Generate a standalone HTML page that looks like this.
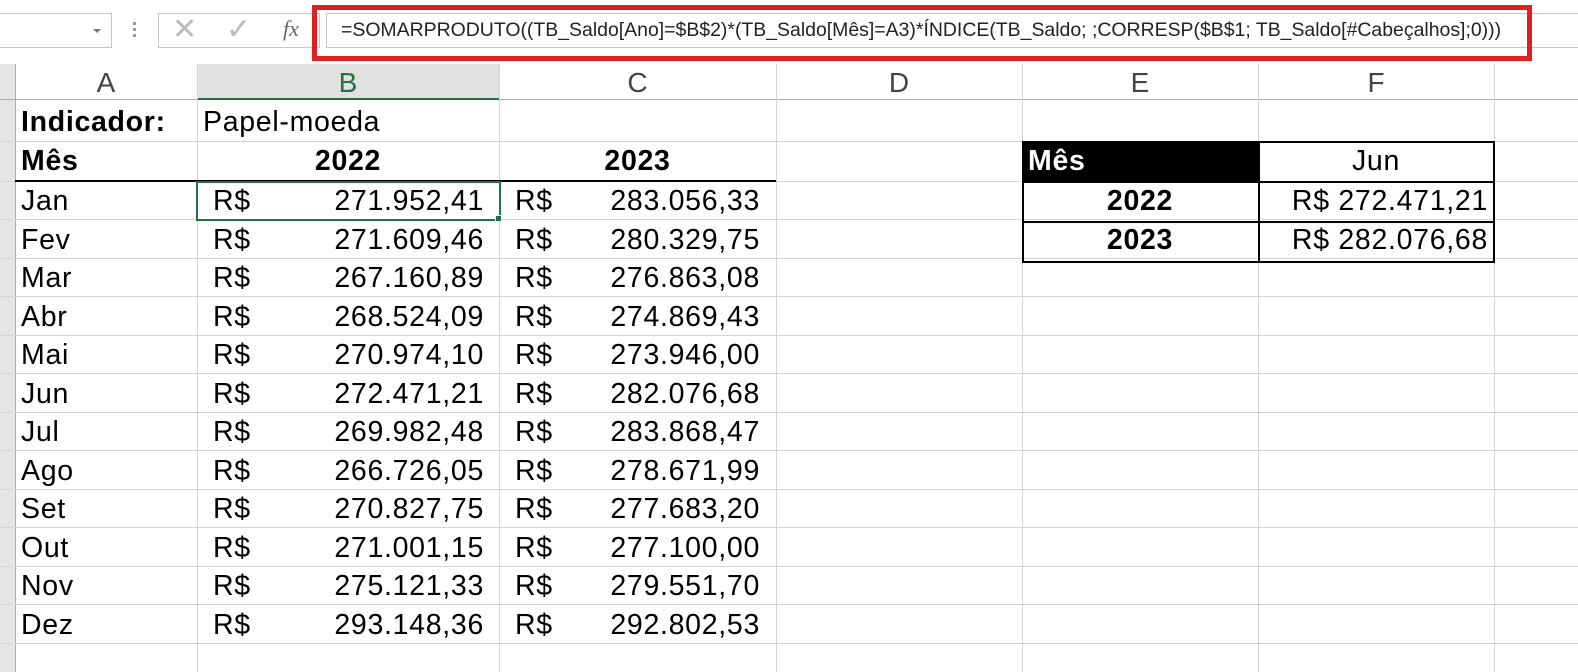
<!DOCTYPE html>
<html><head><meta charset="utf-8"><style>
*{margin:0;padding:0;box-sizing:border-box}
body{width:1578px;height:672px;overflow:hidden;background:#fff;font-family:"Liberation Sans",Arial,sans-serif;position:relative}
.a{position:absolute}
.hl{position:absolute;left:0;width:1578px;height:1px;background:#d4d4d4}
.vl{position:absolute;top:64px;height:608px;width:1px;background:#d4d4d4}
.ch{position:absolute;top:64px;height:36px;font-size:28px;color:#444;text-align:center;line-height:38px}
.t{position:absolute;font-size:28.5px;letter-spacing:0.7px;color:#000;white-space:nowrap;line-height:38px}
.b{font-weight:bold}
</style></head><body>
<!-- toolbar -->
<div class="a" style="left:0;top:13px;width:112px;height:35px;border:1px solid #c6c6c6;border-left:none"></div>
<div class="a" style="left:93px;top:29px;width:0;height:0;border-left:4px solid transparent;border-right:4px solid transparent;border-top:4px solid #777"></div>
<div class="a" style="left:133px;top:22px;width:3px;height:3px;background:#999;box-shadow:0 6px 0 #999,0 12px 0 #999"></div>
<div class="a" style="left:158px;top:13px;width:162px;height:35px;border:1px solid #c6c6c6"></div>
<div class="a" style="left:172px;top:12px;font-size:30px;color:#bbb">✕</div>
<div class="a" style="left:226px;top:12px;font-size:30px;color:#bbb">✓</div>
<div class="a" style="left:283px;top:16px;font-size:22px;color:#666;font-family:'Liberation Serif',serif;font-style:italic">fx</div>
<div class="a" style="left:326px;top:13px;width:1252px;height:35px;border-top:1px solid #c6c6c6;border-bottom:1px solid #c6c6c6;border-left:1px solid #c6c6c6"></div>
<div class="a" style="left:341px;top:19px;font-size:19.45px;color:#222;white-space:nowrap">=SOMARPRODUTO((TB_Saldo[Ano]=$B$2)*(TB_Saldo[Mês]=A3)*ÍNDICE(TB_Saldo; ;CORRESP($B$1; TB_Saldo[#Cabeçalhos];0)))</div>
<div class="a" style="left:312px;top:5px;width:1220px;height:56px;border:5px solid #e02020"></div>
<!-- column headers -->
<div class="a" style="left:0;top:64px;width:15px;height:608px;background:#e6e6e6"></div>
<div class="a" style="left:197px;top:64px;width:302px;height:36px;background:#e1e1e1"></div>
<div class="hl" style="top:99px;background:#ababab"></div>
<div class="a" style="left:197px;top:98px;width:302px;height:2px;background:#217346"></div>
<div class="vl" style="left:15px;background:#ababab"></div>
<div class="vl" style="left:197px"></div>
<div class="vl" style="left:499px"></div>
<div class="vl" style="left:776px"></div>
<div class="vl" style="left:1022px"></div>
<div class="vl" style="left:1258px"></div>
<div class="vl" style="left:1494px"></div>
<div class="ch" style="left:15px;width:182px">A</div>
<div class="ch" style="left:197px;width:302px;color:#217346">B</div>
<div class="ch" style="left:499px;width:277px">C</div>
<div class="ch" style="left:776px;width:246px">D</div>
<div class="ch" style="left:1022px;width:236px">E</div>
<div class="ch" style="left:1258px;width:236px">F</div>
<!-- row lines -->
<div class="hl" style="top:141px"></div>
<div class="hl" style="top:181px"></div>
<div class="hl" style="top:219px"></div>
<div class="hl" style="top:258px"></div>
<div class="hl" style="top:296px"></div>
<div class="hl" style="top:335px"></div>
<div class="hl" style="top:373px"></div>
<div class="hl" style="top:412px"></div>
<div class="hl" style="top:450px"></div>
<div class="hl" style="top:489px"></div>
<div class="hl" style="top:527px"></div>
<div class="hl" style="top:566px"></div>
<div class="hl" style="top:604px"></div>
<div class="hl" style="top:643px"></div>
<div class="a" style="left:15px;top:180px;width:761px;height:2px;background:#000"></div>
<!-- row 1,2 -->
<div class="t b" style="left:21px;top:103px">Indicador:</div>
<div class="t" style="left:203px;top:103px">Papel-moeda</div>
<div class="t b" style="left:21px;top:142px">Mês</div>
<div class="t b" style="left:197px;top:142px;width:302px;text-align:center">2022</div>
<div class="t b" style="left:499px;top:142px;width:277px;text-align:center">2023</div>
<!-- data -->
<div class="a" style="left:0;top:181px">
<div style="position:relative">
<div class="t" style="left:21px;top:1px">Jan</div><div class="t" style="left:213px;top:1px">R$</div><div class="t" style="left:300px;top:1px;width:184px;text-align:right">271.952,41</div><div class="t" style="left:515px;top:1px">R$</div><div class="t" style="left:560px;top:1px;width:200px;text-align:right">283.056,33</div>
<div class="t" style="left:21px;top:39.5px">Fev</div><div class="t" style="left:213px;top:39.5px">R$</div><div class="t" style="left:300px;top:39.5px;width:184px;text-align:right">271.609,46</div><div class="t" style="left:515px;top:39.5px">R$</div><div class="t" style="left:560px;top:39.5px;width:200px;text-align:right">280.329,75</div>
<div class="t" style="left:21px;top:78px">Mar</div><div class="t" style="left:213px;top:78px">R$</div><div class="t" style="left:300px;top:78px;width:184px;text-align:right">267.160,89</div><div class="t" style="left:515px;top:78px">R$</div><div class="t" style="left:560px;top:78px;width:200px;text-align:right">276.863,08</div>
<div class="t" style="left:21px;top:116.5px">Abr</div><div class="t" style="left:213px;top:116.5px">R$</div><div class="t" style="left:300px;top:116.5px;width:184px;text-align:right">268.524,09</div><div class="t" style="left:515px;top:116.5px">R$</div><div class="t" style="left:560px;top:116.5px;width:200px;text-align:right">274.869,43</div>
<div class="t" style="left:21px;top:155px">Mai</div><div class="t" style="left:213px;top:155px">R$</div><div class="t" style="left:300px;top:155px;width:184px;text-align:right">270.974,10</div><div class="t" style="left:515px;top:155px">R$</div><div class="t" style="left:560px;top:155px;width:200px;text-align:right">273.946,00</div>
<div class="t" style="left:21px;top:193.5px">Jun</div><div class="t" style="left:213px;top:193.5px">R$</div><div class="t" style="left:300px;top:193.5px;width:184px;text-align:right">272.471,21</div><div class="t" style="left:515px;top:193.5px">R$</div><div class="t" style="left:560px;top:193.5px;width:200px;text-align:right">282.076,68</div>
<div class="t" style="left:21px;top:232px">Jul</div><div class="t" style="left:213px;top:232px">R$</div><div class="t" style="left:300px;top:232px;width:184px;text-align:right">269.982,48</div><div class="t" style="left:515px;top:232px">R$</div><div class="t" style="left:560px;top:232px;width:200px;text-align:right">283.868,47</div>
<div class="t" style="left:21px;top:270.5px">Ago</div><div class="t" style="left:213px;top:270.5px">R$</div><div class="t" style="left:300px;top:270.5px;width:184px;text-align:right">266.726,05</div><div class="t" style="left:515px;top:270.5px">R$</div><div class="t" style="left:560px;top:270.5px;width:200px;text-align:right">278.671,99</div>
<div class="t" style="left:21px;top:309px">Set</div><div class="t" style="left:213px;top:309px">R$</div><div class="t" style="left:300px;top:309px;width:184px;text-align:right">270.827,75</div><div class="t" style="left:515px;top:309px">R$</div><div class="t" style="left:560px;top:309px;width:200px;text-align:right">277.683,20</div>
<div class="t" style="left:21px;top:347.5px">Out</div><div class="t" style="left:213px;top:347.5px">R$</div><div class="t" style="left:300px;top:347.5px;width:184px;text-align:right">271.001,15</div><div class="t" style="left:515px;top:347.5px">R$</div><div class="t" style="left:560px;top:347.5px;width:200px;text-align:right">277.100,00</div>
<div class="t" style="left:21px;top:386px">Nov</div><div class="t" style="left:213px;top:386px">R$</div><div class="t" style="left:300px;top:386px;width:184px;text-align:right">275.121,33</div><div class="t" style="left:515px;top:386px">R$</div><div class="t" style="left:560px;top:386px;width:200px;text-align:right">279.551,70</div>
<div class="t" style="left:21px;top:424.5px">Dez</div><div class="t" style="left:213px;top:424.5px">R$</div><div class="t" style="left:300px;top:424.5px;width:184px;text-align:right">293.148,36</div><div class="t" style="left:515px;top:424.5px">R$</div><div class="t" style="left:560px;top:424.5px;width:200px;text-align:right">292.802,53</div>
</div></div>
<!-- selection -->
<div class="a" style="left:196px;top:181px;width:305px;height:40px;border:2px solid #217346"></div>
<div class="a" style="left:495px;top:215px;width:7px;height:7px;background:#217346;border:1px solid #fff"></div>
<!-- summary table -->
<div class="a" style="left:1022px;top:141px;width:237px;height:41px;background:#000"></div>
<div class="a" style="left:1022px;top:141px;width:473px;height:122px;border:2px solid #000"></div>
<div class="a" style="left:1022px;top:181px;width:473px;height:2px;background:#000"></div>
<div class="a" style="left:1022px;top:221px;width:473px;height:2px;background:#000"></div>
<div class="a" style="left:1258px;top:141px;width:2px;height:122px;background:#000"></div>
<div class="t b" style="left:1028px;top:142px;color:#fff">Mês</div>
<div class="t" style="left:1258px;top:142px;width:236px;text-align:center">Jun</div>
<div class="t b" style="left:1022px;top:182px;width:236px;text-align:center">2022</div>
<div class="t" style="left:1260px;top:182px;width:228px;text-align:right">R$ 272.471,21</div>
<div class="t b" style="left:1022px;top:221px;width:236px;text-align:center">2023</div>
<div class="t" style="left:1260px;top:221px;width:228px;text-align:right">R$ 282.076,68</div>
</body></html>
